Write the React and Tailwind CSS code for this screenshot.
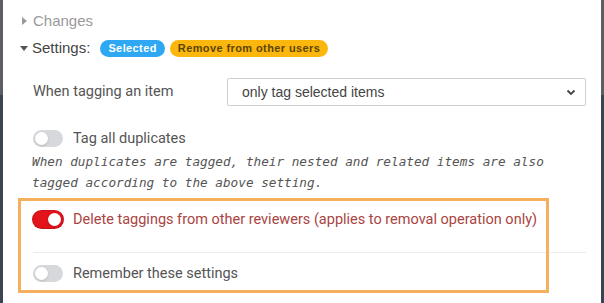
import React from "react";

const Toggle = ({ on }) => (
  <span
    className={
      "relative inline-flex h-[17px] w-[30px] shrink-0 items-center rounded-full " +
      (on ? "bg-[#e3131b] ring-1 ring-[#c9111a]" : "bg-[#d6d8dc]")
    }
  >
    <span
      className={
        "absolute top-[2px] h-[13px] w-[13px] rounded-full bg-white shadow-sm " +
        (on ? "left-[15px]" : "left-[2px]")
      }
    />
  </span>
);

const Edge = () => (
  <div className="flex w-[3px] flex-col">
    <div className="h-[95px] bg-[#5b5e63]" />
    <div className="flex-1 bg-[#3a4452]" />
  </div>
);

export default function App() {
  return (
    <div className="flex h-[303px] w-[604px] overflow-hidden bg-[#3a4452]">
      <Edge />
      <div className="relative flex-1 bg-white pr-[15px] pl-[17px] font-['Roboto',sans-serif] text-[14.5px] text-[#555]">
        {/* collapsed section */}
        <div className="mt-[12px] flex h-[18px] items-center font-['Liberation_Sans',sans-serif] text-[15px] text-[#9a9a9a]">
          <span className="ml-[2px] mr-[6px] h-0 w-0 border-y-[4.5px] border-l-[5px] border-y-transparent border-l-[#999]" />
          <span>Changes</span>
        </div>

        {/* settings section */}
        <div className="mt-[9px] flex h-[18px] items-center font-['Liberation_Sans',sans-serif] text-[15px] text-[#444]">
          <span className="mr-[4px] h-0 w-0 border-x-[4.5px] border-t-[5px] border-x-transparent border-t-[#555]" />
          <span>Settings:</span>
          <span className="ml-[10px] rounded-full bg-[#2fa8f3] px-[8px] py-[1px] text-[11px] leading-[15px] font-bold tracking-[0.4px] text-white">
            Selected
          </span>
          <span className="ml-[5px] rounded-full bg-[#fbb70d] px-[8px] py-[1px] text-[11px] leading-[15px] font-bold tracking-[0.4px] text-[#5b4600]">
            Remove from other users
          </span>
        </div>

        <div className="pl-[13px]">
          <div className="mt-[21px] flex items-center">
            <span className="w-[194px]">When tagging an item</span>
            <div className="flex h-[28px] flex-1 items-center justify-between rounded-[2px] border border-[#cfcfcf] pr-[9px] pl-[14px] font-['Liberation_Sans',sans-serif] text-[14px] text-[#444]">
              only tag selected items
              <svg width="10" height="7" viewBox="0 0 10 7" fill="none">
                <path d="M1.5 1.5 5 5l3.5-3.5" stroke="#444" strokeWidth="1.8" />
              </svg>
            </div>
          </div>

          <div className="mt-[22px] flex h-[21px] items-center gap-[10px]">
            <Toggle />
            <span>Tag all duplicates</span>
          </div>
          <div className="mt-[2px] -ml-[1px] font-['DejaVu_Sans_Mono',monospace] text-[12.7px] italic text-[#555]">
            <div className="h-[21px] leading-[21px]">
              When duplicates are tagged, their nested and related items are also
            </div>
            <div className="h-[21px] leading-[21px]">tagged according to the above setting.</div>
          </div>

          <div className="mt-[16px] flex h-[21px] items-center gap-[10px]">
            <Toggle on />
            <span className="text-[#a94442]">
              Delete taggings from other reviewers (applies to removal operation only)
            </span>
          </div>
          <div className="mt-[22px] h-px bg-[#ececec]" />
          <div className="mt-[10px] flex h-[21px] items-center gap-[10px]">
            <Toggle />
            <span>Remember these settings</span>
          </div>
        </div>

        {/* highlight overlay */}
        <div className="pointer-events-none absolute top-[198px] left-[15px] h-[95px] w-[531px] border-[3px] border-[#f6ae5f]" />
      </div>
      <Edge />
    </div>
  );
}
